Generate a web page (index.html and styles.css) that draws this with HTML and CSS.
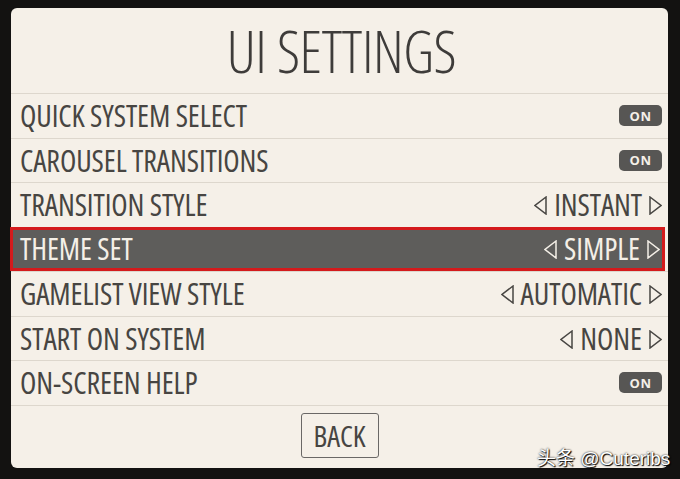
FILE: index.html
```html
<!DOCTYPE html>
<html lang="en">
<head>
  <meta charset="UTF-8">
  <meta name="viewport" content="width=device-width, initial-scale=1.0">
  <title>UI Settings</title>
  <link rel="stylesheet" href="styles.css">
</head>
<body>
  <div class="screen">
    <h1 class="title">UI SETTINGS</h1>

    <ul class="menu">
      <li class="row">
        <span class="label">QUICK SYSTEM SELECT</span>
        <span class="switch">ON</span>
      </li>
      <li class="row">
        <span class="label">CAROUSEL TRANSITIONS</span>
        <span class="switch">ON</span>
      </li>
      <li class="row">
        <span class="label">TRANSITION STYLE</span>
        <span class="option">
          <svg class="arrow" viewBox="0 0 13 19"><polygon points="12,1 1,9.5 12,18"/></svg>
          <span>INSTANT</span>
          <svg class="arrow" viewBox="0 0 13 19"><polygon points="1,1 12,9.5 1,18"/></svg>
        </span>
      </li>
      <li class="row selected">
        <span class="label">THEME SET</span>
        <span class="option">
          <svg class="arrow" viewBox="0 0 13 19"><polygon points="12,1 1,9.5 12,18"/></svg>
          <span>SIMPLE</span>
          <svg class="arrow" viewBox="0 0 13 19"><polygon points="1,1 12,9.5 1,18"/></svg>
        </span>
      </li>
      <li class="row">
        <span class="label">GAMELIST VIEW STYLE</span>
        <span class="option">
          <svg class="arrow" viewBox="0 0 13 19"><polygon points="12,1 1,9.5 12,18"/></svg>
          <span>AUTOMATIC</span>
          <svg class="arrow" viewBox="0 0 13 19"><polygon points="1,1 12,9.5 1,18"/></svg>
        </span>
      </li>
      <li class="row">
        <span class="label">START ON SYSTEM</span>
        <span class="option">
          <svg class="arrow" viewBox="0 0 13 19"><polygon points="12,1 1,9.5 12,18"/></svg>
          <span>NONE</span>
          <svg class="arrow" viewBox="0 0 13 19"><polygon points="1,1 12,9.5 1,18"/></svg>
        </span>
      </li>
      <li class="row">
        <span class="label">ON-SCREEN HELP</span>
        <span class="switch">ON</span>
      </li>
    </ul>

    <div class="footer">
      <button class="back">BACK</button>
    </div>
  </div>

  <div class="watermark">头条 @Cuteribs</div>
</body>
</html>
```

FILE: styles.css
```css
html, body {
  height: 100%;
}
body {
  margin: 0;
  background: #131211;
  font-family: "Open Sans", "Liberation Sans", sans-serif;
  font-stretch: 75%;
  font-weight: 380;
  color: #474542;
  overflow: hidden;
  position: relative;
}
.screen {
  margin: 8px 12px 0 11px;
  height: 460px;
  background: #f5f0e8;
  border-radius: 6px;
  display: flex;
  flex-direction: column;
}
.title {
  margin: 0;
  height: 85px;
  display: flex;
  align-items: center;
  justify-content: center;
  font-size: 58px;
  font-weight: 330;
  color: #3e3c3a;
  padding-left: 4px;
  letter-spacing: -0.4px;
}
.menu {
  list-style: none;
  margin: 0;
  padding: 0;
}
.row {
  height: 44.5px;
  box-sizing: border-box;
  border-top: 1px solid #ddd7cd;
  display: flex;
  align-items: center;
  justify-content: space-between;
  padding: 0 6px 0 9px;
  font-size: 30px;
  letter-spacing: -0.1px;
}
.row.selected {
  background: #5e5d5b;
  color: #f4efe7;
  border: 3px solid #d41a1c;
  margin: 0 3px 0 -1px;
  padding: 0 2px 0 7px;
}
.switch {
  width: 43px;
  height: 21px;
  border-radius: 5px;
  background: #575654;
  color: #f4efe7;
  font-family: "Open Sans", sans-serif;
  font-stretch: 100%;
  font-size: 13px;
  font-weight: 700;
  display: flex;
  align-items: center;
  justify-content: center;
  letter-spacing: 0.5px;
}
.option {
  display: flex;
  align-items: center;
  gap: 7px;
}
.arrow {
  flex-shrink: 0;
  width: 13px;
  height: 19px;
  margin-top: 2px;
  fill: none;
  stroke: currentColor;
  stroke-width: 1.5;
  stroke-linejoin: miter;
}
.footer {
  border-top: 1px solid #ddd7cd;
  flex: 1;
  display: flex;
  justify-content: center;
  padding-top: 7px;
}
.back {
  width: 78px;
  height: 45px;
  background: none;
  border: 1.5px solid #6a6866;
  border-radius: 3px;
  font-family: inherit;
  font-stretch: 75%;
  font-weight: 380;
  font-size: 29px;
  color: #474542;
  padding: 0;
}
.watermark {
  position: absolute;
  left: 537px;
  top: 443px;
  font-family: "Liberation Sans", "Noto Sans CJK SC", sans-serif;
  font-size: 19px;
  color: #ffffff;
  text-shadow: 0 0 2px #000, 1px 1px 1px #000;
}
```
